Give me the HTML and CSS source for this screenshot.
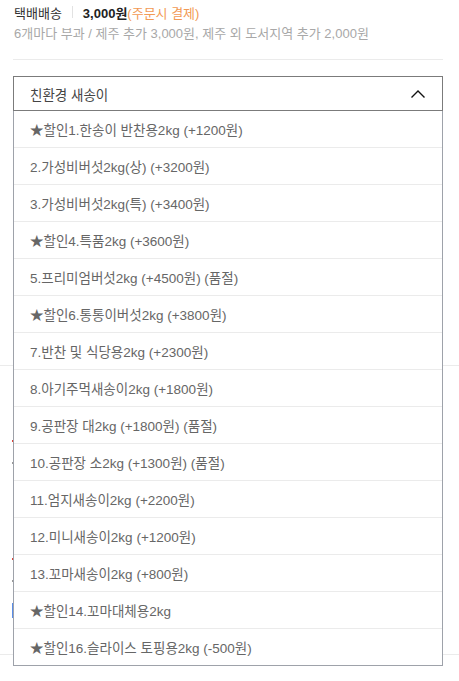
FILE: index.html
```html
<!DOCTYPE html>
<html lang="ko">
<head>
	<meta charset="UTF-8">
	<meta name="viewport" content="width=device-width, initial-scale=1.0">
	<title>옵션 선택</title>
	<link rel="stylesheet" href="styles.css">
</head>
<body>
	<div class="page">
        <div class="delivery">
            <p class="deliveryRow">
                <span class="deliveryType">택배배송</span>
                <span class="bar"></span>
                <strong class="fee">3,000원</strong><span class="payNote">(주문시 결제)</span>
            </p>
            <p class="deliveryNote">6개마다 부과 / 제주 추가 3,000원, 제주 외 도서지역 추가 2,000원</p>
        </div>

        <div class="optionSelect">
            <div class="selectHead">
                <span>친환경 새송이</span>
                <svg class="chevron" width="16" height="10" viewBox="0 0 16 10">
                    <path d="M1.5 8.5 L8 2 L14.5 8.5" fill="none" stroke="#111" stroke-width="1.4"/>
                </svg>
            </div>
            <ul class="optionList">
                <li>★할인1.한송이 반찬용2kg (+1200원)</li>
                <li>2.가성비버섯2kg(상) (+3200원)</li>
                <li>3.가성비버섯2kg(특) (+3400원)</li>
                <li>★할인4.특품2kg (+3600원)</li>
                <li>5.프리미엄버섯2kg (+4500원) (품절)</li>
                <li>★할인6.통통이버섯2kg (+3800원)</li>
                <li>7.반찬 및 식당용2kg (+2300원)</li>
                <li>8.아기주먹새송이2kg (+1800원)</li>
                <li>9.공판장 대2kg (+1800원) (품절)</li>
                <li>10.공판장 소2kg (+1300원) (품절)</li>
                <li>11.엄지새송이2kg (+2200원)</li>
                <li>12.미니새송이2kg (+1200원)</li>
                <li>13.꼬마새송이2kg (+800원)</li>
                <li>★할인14.꼬마대체용2kg</li>
                <li>★할인16.슬라이스 토핑용2kg (-500원)</li>
            </ul>
        </div>

        <div class="behind">
            <div class="behindLine"></div>
            <div class="behindBlock">
                <span class="mark red"></span>
                <span class="mark grey"></span>
            </div>
            <div class="behindBlock low">
                <span class="mark red"></span>
                <span class="mark grey"></span>
                <span class="mark blue"></span>
            </div>
            <div class="behindLine"></div>
        </div>
	</div>
</body>
</html>
```

FILE: styles.css
```css
body {
    margin: 0;
    font-family: 'Liberation Sans', 'Noto Sans CJK KR', sans-serif;
    font-size: 13px;
    color: #333;
    background-color: #fff;
}
p {
    margin: 0;
}
.page {
    width: 459px;
    min-height: 681px;
}
.delivery {
    margin: 0 16px 0 13px;
    padding: 2px 0 15px 1px;
    border-bottom: 1px solid #ebebeb;
}
.deliveryRow {
    display: flex;
    align-items: center;
    height: 20px;
}
.bar {
    width: 1px;
    height: 12px;
    background-color: #e2e2e2;
    margin: 0 10px 0 10px;
}
.fee {
    color: #222;
}
.payNote {
    color: #f29a55;
}
.deliveryNote {
    color: #a8a8a8;
    height: 20px;
    line-height: 20px;
    margin-top: 2px;
}
.optionSelect {
    position: relative;
    margin: 16px 16px 0 13px;
}
.selectHead {
    display: flex;
    justify-content: space-between;
    align-items: center;
    height: 33px;
    padding: 0 16px 0 16px;
    border: 1px solid #7b7b7b;
    color: #444;
    font-size: 13.5px;
}
.chevron {
    display: block;
}
.optionList {
    position: absolute;
    top: 100%;
    left: 0;
    right: 0;
    z-index: 2;
    margin: 0;
    padding: 0;
    list-style: none;
    background-color: #fff;
    border: 1px solid #9ea2aa;
    border-top: 0;
}
.optionList li {
    height: 34px;
    padding-top: 2px;
    line-height: 35px;
    padding-left: 16px;
    color: #666;
    font-size: 13.5px;
    border-top: 1px solid #ebebeb;
}
.optionList li:first-child {
    border-top: 0;
}
.behind {
    padding-top: 254px;
}
.behindLine {
    height: 1px;
    background-color: #ebebeb;
}
.behindBlock {
    display: flow-root;
    height: 96px;
    margin-left: 12px;
}
.behindBlock.low {
    height: 192px;
}
.mark {
    display: block;
    width: 1px;
    height: 2px;
    margin-top: 74px;
}
.mark.red {
    background-color: #e0443a;
}
.mark.grey {
    margin-top: 20px;
    background-color: #999;
}
.mark.blue {
    width: 2px;
    height: 15px;
    margin-top: 21px;
    background-color: #5b8ee8;
}
.behindBlock.low .mark.red {
    margin-top: 96px;
}
```
